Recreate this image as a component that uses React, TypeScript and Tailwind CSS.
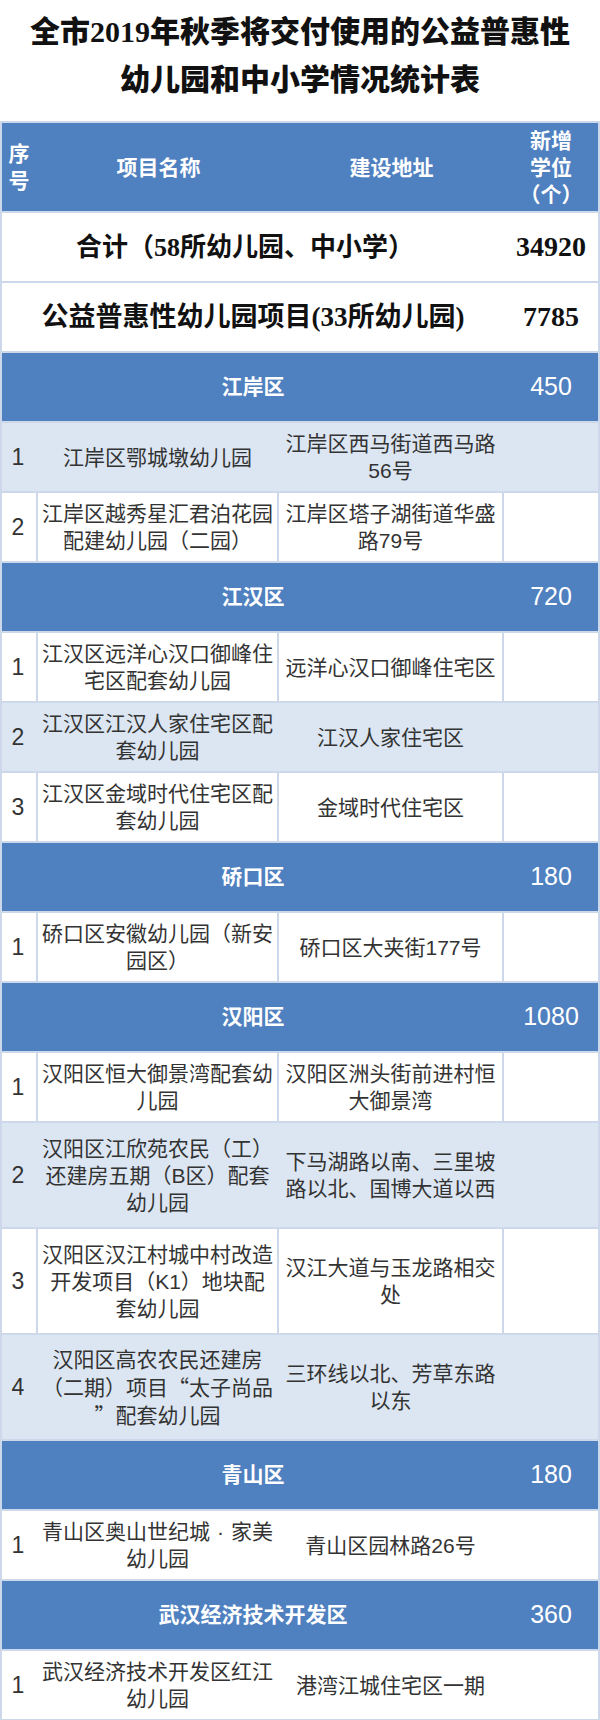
import type { ReactNode } from "react"

type Item = {
  no: string
  name: ReactNode[]
  addr: ReactNode[]
  tone: "light" | "grid" | "plain"
}

type Section = { district: string; total: string; items: Item[] }

const Dot = () => <span className="inline-block w-[21px] text-center">·</span>
const OpenQ = () => <span className="inline-block w-[21px] text-right font-['Noto_Sans_CJK_SC',sans-serif]">“</span>
const CloseQ = () => <span className="inline-block w-[21px] text-left font-['Noto_Sans_CJK_SC',sans-serif]">”</span>
const OpenP = () => <span className="inline-block w-[21px] text-right">（</span>
const CloseP = () => <span className="inline-block w-[21px] text-left">）</span>

const sections: Section[] = [
  {
    district: "江岸区",
    total: "450",
    items: [
      { no: "1", name: ["江岸区鄂城墩幼儿园"], addr: ["江岸区西马街道西马路", "56号"], tone: "light" },
      { no: "2", name: ["江岸区越秀星汇君泊花园", "配建幼儿园（二园）"], addr: ["江岸区塔子湖街道华盛", "路79号"], tone: "grid" },
    ],
  },
  {
    district: "江汉区",
    total: "720",
    items: [
      { no: "1", name: ["江汉区远洋心汉口御峰住", "宅区配套幼儿园"], addr: ["远洋心汉口御峰住宅区"], tone: "grid" },
      { no: "2", name: ["江汉区江汉人家住宅区配", "套幼儿园"], addr: ["江汉人家住宅区"], tone: "light" },
      { no: "3", name: ["江汉区金域时代住宅区配", "套幼儿园"], addr: ["金域时代住宅区"], tone: "grid" },
    ],
  },
  {
    district: "硚口区",
    total: "180",
    items: [
      { no: "1", name: ["硚口区安徽幼儿园（新安", "园区）"], addr: ["硚口区大夹街177号"], tone: "grid" },
    ],
  },
  {
    district: "汉阳区",
    total: "1080",
    items: [
      { no: "1", name: ["汉阳区恒大御景湾配套幼", "儿园"], addr: ["汉阳区洲头街前进村恒", "大御景湾"], tone: "grid" },
      { no: "2", name: ["汉阳区江欣苑农民（工）", "还建房五期（B区）配套", "幼儿园"], addr: ["下马湖路以南、三里坡", "路以北、国博大道以西"], tone: "light" },
      { no: "3", name: ["汉阳区汉江村城中村改造", "开发项目（K1）地块配", "套幼儿园"], addr: ["汉江大道与玉龙路相交", "处"], tone: "grid" },
      {
        no: "4",
        name: [
          "汉阳区高农农民还建房",
          <><OpenP />二期<CloseP />项目<OpenQ />太子尚品</>,
          <><CloseQ />配套幼儿园</>,
        ],
        addr: ["三环线以北、芳草东路", "以东"],
        tone: "light",
      },
    ],
  },
  {
    district: "青山区",
    total: "180",
    items: [
      { no: "1", name: [<>青山区奥山世纪城<Dot />家美</>, "幼儿园"], addr: ["青山区园林路26号"], tone: "plain" },
    ],
  },
  {
    district: "武汉经济技术开发区",
    total: "360",
    items: [
      { no: "1", name: ["武汉经济技术开发区红江", "幼儿园"], addr: ["港湾江城住宅区一期"], tone: "plain" },
    ],
  },
]

function Lines({ lines }: { lines: ReactNode[] }) {
  return (
    <div className="flex flex-col items-center text-center">
      {lines.map((l, i) => (
        <div key={i} className="whitespace-nowrap">{l}</div>
      ))}
    </div>
  )
}

function DataRow({ item }: { item: Item }) {
  const tall = item.name.length > 2 || item.addr.length > 2
  const div = item.tone === "grid" ? "border-r-2 border-[#cdd9eb]" : "border-r-2 border-transparent"
  return (
    <div
      className={`grid grid-cols-[36px_241px_225px_1fr] border-b-2 border-[#cdd9eb] text-[21px] leading-[27px] text-[#333] ${
        tall ? "h-[106px]" : "h-[70px]"
      } ${item.tone === "light" ? "bg-[#dce6f2]" : "bg-white"}`}
    >
      <div className={`flex items-center justify-center pr-[2px] text-[23px] ${div}`}>{item.no}</div>
      <div className={`flex items-center justify-center px-[3px] ${div}`}>
        <Lines lines={item.name} />
      </div>
      <div className={`flex items-center justify-center px-[6px] ${div}`}>
        <Lines lines={item.addr} />
      </div>
      <div />
    </div>
  )
}

function DistrictRow({ s }: { s: Section }) {
  return (
    <div className="grid grid-cols-[36px_241px_225px_1fr] h-[70px] border-b-2 border-[#cdd9eb] bg-[#4f80c0] text-white">
      <div className="col-span-3 flex items-center justify-center text-[21px] font-bold">{s.district}</div>
      <div className="flex items-center justify-center text-[25px]">{s.total}</div>
    </div>
  )
}

export default function App() {
  return (
    <div className="w-[600px] bg-white font-['Liberation_Sans','Noto_Sans_CJK_SC',sans-serif]">
      <div className="h-[121px] pt-[8px] text-center text-[30px] leading-[48px] font-black text-[#111] font-['Liberation_Serif','Noto_Sans_CJK_SC',serif]">
        <div className="whitespace-nowrap">全市2019年秋季将交付使用的公益普惠性</div>
        <div className="whitespace-nowrap">幼儿园和中小学情况统计表</div>
      </div>

      <div className="border-x-2 border-t-2 border-[#cdd9eb]">
        <div className="grid grid-cols-[36px_241px_225px_1fr] h-[90px] border-b-2 border-[#cdd9eb] bg-[#4f80c0] text-white text-[21px] leading-[27px] font-bold">
          <div className="flex items-center justify-center pr-[2px]">
            <Lines lines={["序", "号"]} />
          </div>
          <div className="flex items-center justify-center">项目名称</div>
          <div className="flex items-center justify-center">建设地址</div>
          <div className="flex items-center justify-center">
            <Lines lines={["新增", "学位", <><OpenP />个<CloseP /></>]} />
          </div>
        </div>

        <div className="grid grid-cols-[36px_241px_225px_1fr] h-[70px] border-b-2 border-[#cdd9eb] bg-white text-[#111] font-bold font-['Liberation_Serif','Noto_Sans_CJK_SC',serif]">
          <div className="col-span-3 flex items-center justify-center pr-4 text-[26px] whitespace-nowrap">合计（58所幼儿园、中小学）</div>
          <div className="flex items-center justify-center text-[28px]">34920</div>
        </div>
        <div className="grid grid-cols-[36px_241px_225px_1fr] h-[70px] border-b-2 border-[#cdd9eb] bg-white text-[#111] font-bold font-['Liberation_Serif','Noto_Sans_CJK_SC',serif]">
          <div className="col-span-3 flex items-center justify-center text-[27px] whitespace-nowrap">公益普惠性幼儿园项目(33所幼儿园)</div>
          <div className="flex items-center justify-center text-[28px]">7785</div>
        </div>

        {sections.map((s) => (
          <div key={s.district}>
            <DistrictRow s={s} />
            {s.items.map((it, i) => (
              <DataRow key={i} item={it} />
            ))}
          </div>
        ))}
      </div>
    </div>
  )
}
